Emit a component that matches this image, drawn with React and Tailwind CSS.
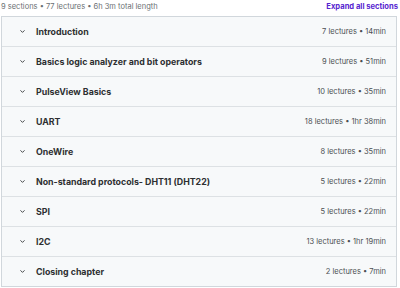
import React from "react";

const sections = [
  { title: "Introduction", meta: "7 lectures • 14min" },
  { title: "Basics logic analyzer and bit operators", meta: "9 lectures • 51min" },
  { title: "PulseView Basics", meta: "10 lectures • 35min" },
  { title: "UART", meta: "18 lectures • 1hr 38min" },
  { title: "OneWire", meta: "8 lectures • 35min" },
  { title: "Non-standard protocols- DHT11 (DHT22)", meta: "5 lectures • 22min" },
  { title: "SPI", meta: "5 lectures • 22min" },
  { title: "I2C", meta: "13 lectures • 1hr 19min" },
  { title: "Closing chapter", meta: "2 lectures • 7min" },
];

function Chevron() {
  return (
    <svg width="7" height="7" viewBox="0 0 24 24" fill="none" stroke="#2d2f31" strokeWidth="3" strokeLinecap="round" strokeLinejoin="round">
      <path d="M6 9l6 6 6-6" />
    </svg>
  );
}

export default function App() {
  return (
    <div className="w-[400px] h-[288px] bg-white overflow-hidden" style={{ fontFamily: "Inter, 'Noto Sans', sans-serif" }}>
      {/* header line */}
      <div className="flex items-center justify-between h-[16px] pl-[1px] pr-[2px] pb-[2px]">
        <span className="text-[7.5px] text-[#6a6f73]">9 sections • 77 lectures • 6h 3m total length</span>
        <span className="text-[7.6px] font-bold text-[#5624d0]">Expand all sections</span>
      </div>

      {/* section list */}
      <div className="ml-[1px] w-[396px] border border-[#d1d7dc]">
        {sections.map((s, i) => (
          <div
            key={s.title}
            className={`flex items-center bg-[#f7f9fa] pl-[17px] pr-[10px] ${
              i < sections.length - 1 ? "h-[30px] border-b border-[#dde1e4]" : "h-[29px]"
            }`}
          >
            <Chevron />
            <span className="ml-[10px] text-[8.8px] font-bold text-[#2d2f31]">{s.title}</span>
            <span className="ml-auto text-[7.5px] text-[#4b4f52]">{s.meta}</span>
          </div>
        ))}
      </div>
    </div>
  );
}
